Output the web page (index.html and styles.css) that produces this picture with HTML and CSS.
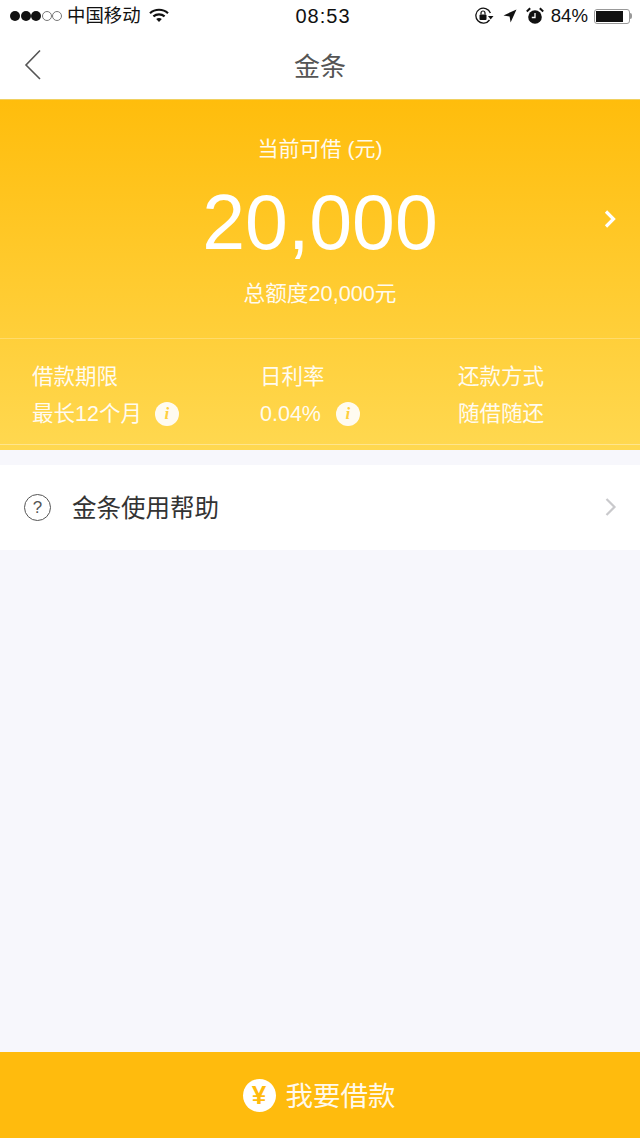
FILE: index.html
```html
<!DOCTYPE html>
<html lang="zh-CN">
<head>
  <meta charset="UTF-8">
  <title>金条</title>
  <link rel="stylesheet" href="styles.css">
</head>
<body>

<div class="page">
  <!-- Status bar -->
  <div class="status-bar">
    <div class="status-left">
      <span class="signal">
        <i class="dot"></i><i class="dot"></i><i class="dot"></i><i class="dot off"></i><i class="dot off"></i>
      </span>
      <span class="carrier">中国移动</span>
      <svg class="wifi" width="20" height="15" viewBox="0 0 20 15">
        <path d="M1 5.2 C6 .6 14 .6 19 5.2" fill="none" stroke="#111" stroke-width="2.2"/>
        <path d="M4.4 8.4 C7.6 5.6 12.4 5.6 15.6 8.4" fill="none" stroke="#111" stroke-width="2.2"/>
        <path d="M7.2 11 C9 9.6 11 9.6 12.8 11 L10 14 Z" fill="#111"/>
      </svg>
    </div>
    <div class="status-time">08:53</div>
    <div class="status-right">
      <svg width="20" height="18" viewBox="0 0 20 18">
        <path d="M15.5 13 A7.5 7.5 0 1 1 16.4 6" fill="none" stroke="#111" stroke-width="1.3"/>
        <path d="M14 9 L19.5 9 L16.7 12.5 Z" fill="#111"/>
        <rect x="5.5" y="7.5" width="7" height="5.5" rx="1" fill="#111"/>
        <path d="M7 7.5 V6 a2 2 0 0 1 4 0 V7.5" fill="none" stroke="#111" stroke-width="1.2"/>
      </svg>
      <svg class="arrow" width="14" height="14" viewBox="0 0 14 14">
        <path d="M13.5 .5 L7.6 13.5 L6.6 7.4 L.5 6.4 Z" fill="#111"/>
      </svg>
      <svg class="alarm" width="18" height="18" viewBox="0 0 18 18">
        <circle cx="9" cy="10" r="6.8" fill="#111"/>
        <path d="M9 6 V10.5 H5.8" fill="none" stroke="#fff" stroke-width="1.3"/>
        <path d="M.8 4.4 L4.2 1.2 M17.2 4.4 L13.8 1.2" stroke="#111" stroke-width="2"/>
      </svg>
      <span class="percent">84%</span>
      <span class="battery"><span class="battery-fill"></span></span>
      <span class="battery-tip"></span>
    </div>
  </div>

  <!-- Nav -->
  <div class="nav">
    <svg class="back" width="18" height="32" viewBox="0 0 18 32">
      <path d="M16 1.5 L2 16 L16 30" fill="none" stroke="#555" stroke-width="1.6"/>
    </svg>
    <div class="nav-title">金条</div>
  </div>

  <!-- Yellow block -->
  <div class="hero">
    <div class="hero-top">
      <div class="hero-label">当前可借 (元)</div>
      <div class="hero-amount">20,000</div>
      <div class="hero-total">总额度20,000元</div>
      <svg class="hero-arrow" width="14" height="20" viewBox="0 0 14 20">
        <path d="M3 2.5 L10.5 10 L3 17.5" fill="none" stroke="#fff" stroke-width="3.2"/>
      </svg>
    </div>
    <div class="stats">
      <div class="stat">
        <div class="stat-name">借款期限</div>
        <div class="stat-value">最长12个月 <span class="info">i</span></div>
      </div>
      <div class="stat">
        <div class="stat-name">日利率</div>
        <div class="stat-value">0.04% <span class="info info-rate">i</span></div>
      </div>
      <div class="stat">
        <div class="stat-name">还款方式</div>
        <div class="stat-value">随借随还</div>
      </div>
    </div>
  </div>

  <!-- Help row -->
  <div class="help-row">
    <span class="help-icon">?</span>
    <span class="help-text">金条使用帮助</span>
    <svg class="help-arrow" width="14" height="20" viewBox="0 0 14 20">
      <path d="M2.5 2 L10.5 10 L2.5 18" fill="none" stroke="#c9c9cc" stroke-width="2.2"/>
    </svg>
  </div>

  <div class="filler"></div>

  <!-- Bottom button -->
  <div class="borrow-btn">
    <span class="yen">¥</span>
    <span class="borrow-text">我要借款</span>
  </div>
</div>

</body>
</html>
```

FILE: styles.css
```css
* { box-sizing: border-box; }
html, body { margin: 0; padding: 0; }
body { font-family: "Liberation Sans", "Noto Sans CJK SC", sans-serif; background: #f7f7fc; }
.page { width: 640px; height: 1138px; display: flex; flex-direction: column; overflow: hidden; }

.status-bar { height: 33px; background: #fff; display: flex; align-items: center; position: relative; padding: 0 8px 1px 10px; color: #111; }
.status-left { display: flex; align-items: center; }
.signal { display: flex; gap: .5px; }
.dot { width: 10px; height: 10px; border-radius: 50%; background: #111; display: block; }
.dot.off { background: #fff; border: 1px solid #777; }
.carrier { font-size: 18.4px; line-height: 24px; margin-left: 5px; margin-top: -1px; }
.wifi { margin-left: 8px; margin-top: -2px; }
.status-time { position: absolute; left: 0; right: 0; top: 4px; padding-left: 6px; text-align: center; font-size: 20px; line-height: 24px; letter-spacing: 1px; }
.status-right { margin-left: auto; display: flex; align-items: center; }
.arrow { margin-left: 9px; }
.alarm { margin-left: 9px; }
.percent { font-size: 18.6px; margin-left: 7px; }
.battery { width: 36px; height: 15px; margin-left: 6px; border: 1px solid #999; border-radius: 3px; padding: 1px; display: block; }
.battery-fill { display: block; width: 84%; height: 100%; background: #111; }
.battery-tip { width: 2px; height: 6px; background: #999; border-radius: 0 2px 2px 0; }

.nav { height: 66px; background: #fff; display: flex; align-items: center; justify-content: center; position: relative; padding-bottom: 4px; }
.back { position: absolute; left: 24px; top: 16px; }
.nav-title { font-size: 26px; color: #555; }

.hero { height: 351px; background: linear-gradient(#ffbd0c, #ffd850); color: #fff; border-top: 1px solid #f0d060; }
.hero-top { height: 239px; position: relative; border-bottom: 1px solid rgba(255,255,255,.25); text-align: center; padding-top: 35px; }
.hero-label { font-size: 21px; line-height: 28px; opacity: .92; }
.hero-amount { font-size: 77px; line-height: 90px; margin-top: 14px; }
.hero-total { font-size: 21.7px; line-height: 28px; margin-top: 13px; opacity: .92; }
.hero-arrow { position: absolute; right: 23px; top: 109px; }

.stats { height: 106px; display: grid; grid-template-columns: 228px 198px 1fr; padding: 24px 0 0 32px; border-bottom: 1px solid rgba(255,255,255,.35); }
.stat-name { font-size: 21.5px; line-height: 28px; opacity: .92; }
.stat-value { font-size: 21.5px; line-height: 28px; margin-top: 9px; display: flex; align-items: center; gap: 13px; opacity: .92; }
.info { width: 24px; height: 24px; border-radius: 50%; background: #fff; color: #ffd040; font: italic bold 17px/24px "Liberation Serif", serif; text-align: center; }
.info-rate { margin-left: 2px; }

.help-row { height: 85px; margin-top: 15px; background: #fff; display: flex; align-items: center; padding: 0 24px; }
.help-icon { width: 27px; height: 27px; border: 1px solid #555; border-radius: 50%; color: #555; font-size: 17px; line-height: 25px; text-align: center; }
.help-text { font-size: 24.5px; color: #333; margin-left: 21px; margin-top: -2px; }
.help-arrow { margin-left: auto; margin-right: -2px; margin-top: -1px; }

.filler { flex: 1; background: #f7f7fc; }

.borrow-btn { height: 86px; background: #ffbb0d; display: flex; align-items: center; justify-content: center; gap: 10px; color: #fff; padding-right: 2px; }
.yen { width: 33px; height: 33px; border-radius: 50%; background: #fff; color: #ffbb0d; font-size: 26px; font-weight: bold; line-height: 33px; text-align: center; }
.borrow-text { font-size: 27.5px; opacity: .92; margin-top: -2px; }
```
